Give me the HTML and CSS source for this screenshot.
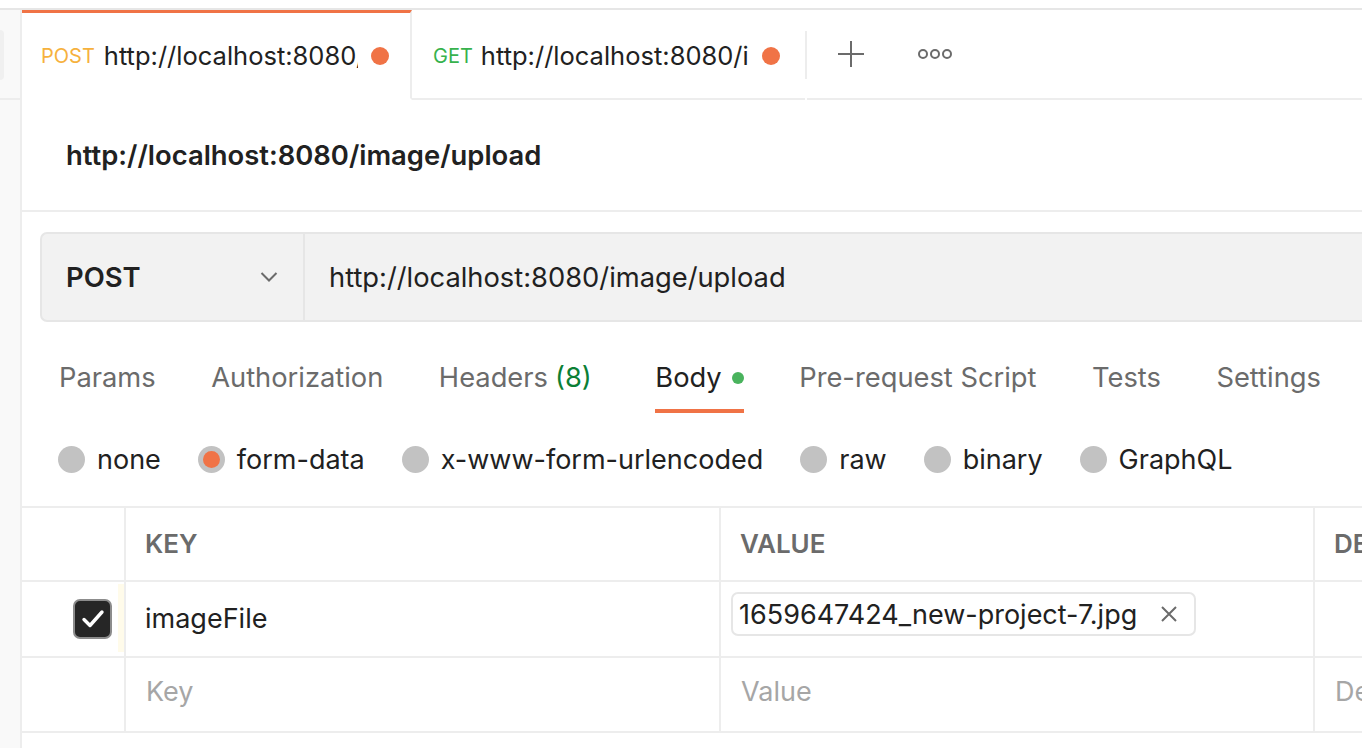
FILE: index.html
```html
<!DOCTYPE html>
<html>
<head>
<meta charset="utf-8">
<link rel="stylesheet" href="styles.css">
</head>
<body>
<div class="topstrip"></div>
<div class="app">
  <aside class="sidebar">
    <div class="side-top"><div class="side-pill"></div></div>
  </aside>
  <main class="main">
    <div class="tabbar">
      <div class="tab active">
        <span class="tab-method post">POST</span>
        <span class="tab-url w1">http://localhost:8080/image/upload</span>
        <span class="tab-dot"></span>
      </div>
      <div class="tab second">
        <span class="tab-method get">GET</span>
        <span class="tab-url w2">http://localhost:8080/image/list</span>
        <span class="tab-dot"></span>
      </div>
      <div class="tab-divider"></div>
      <div class="tab-icon plus">
        <svg width="28" height="28" viewBox="0 0 28 28"><path d="M14 1v26M1 14h26" stroke="#6b6b6b" stroke-width="2" fill="none"/></svg>
      </div>
      <div class="tab-icon more">
        <svg width="34" height="12" viewBox="0 0 34 12"><circle cx="5" cy="6" r="4" stroke="#6b6b6b" stroke-width="2" fill="none"/><circle cx="17" cy="6" r="4" stroke="#6b6b6b" stroke-width="2" fill="none"/><circle cx="29" cy="6" r="4" stroke="#6b6b6b" stroke-width="2" fill="none"/></svg>
      </div>
      <div class="tab-fill"></div>
    </div>

    <div class="titlebar">
      <h1 class="title">http://localhost:8080/image/upload</h1>
    </div>

    <div class="content">
      <div class="urlbox">
        <div class="method">
          <span class="method-name">POST</span>
          <svg class="chev" width="18" height="12" viewBox="0 0 18 12"><path d="M1.5 2l7.5 7.5L16.5 2" stroke="#6b6b6b" stroke-width="2" fill="none"/></svg>
        </div>
        <div class="url">http://localhost:8080/image/upload</div>
      </div>

      <nav class="reqtabs">
        <span class="reqtab">Params</span>
        <span class="reqtab">Authorization</span>
        <span class="reqtab">Headers <span class="count">(8)</span></span>
        <span class="reqtab on">Body <span class="gdot"></span></span>
        <span class="reqtab">Pre-request Script</span>
        <span class="reqtab">Tests</span>
        <span class="reqtab">Settings</span>
      </nav>

      <div class="radios">
        <span class="radio"><span class="rc"></span>none</span>
        <span class="radio sel"><span class="rc"></span>form-data</span>
        <span class="radio"><span class="rc"></span>x-www-form-urlencoded</span>
        <span class="radio"><span class="rc"></span>raw</span>
        <span class="radio"><span class="rc"></span>binary</span>
        <span class="radio"><span class="rc"></span>GraphQL</span>
      </div>
    </div>

    <div class="table">
      <div class="row head">
        <div class="cell c0"></div>
        <div class="cell c1">KEY</div>
        <div class="cell c2">VALUE</div>
        <div class="cell c3">DESCRIPTION</div>
      </div>
      <div class="row">
        <div class="cell c0">
          <span class="cbox"><svg width="26" height="22" viewBox="0 0 26 22"><path d="M4 11.5l6 6L22 4" stroke="#fff" stroke-width="3.4" fill="none" stroke-linecap="round" stroke-linejoin="round"/></svg></span>
          <span class="handle"></span>
        </div>
        <div class="cell c1">imageFile</div>
        <div class="cell c2">
          <span class="chip">1659647424_new-project-7.jpg<svg class="x" width="18" height="18" viewBox="0 0 18 18"><path d="M2 2l14 14M16 2L2 16" stroke="#6b6b6b" stroke-width="2" fill="none"/></svg></span>
        </div>
        <div class="cell c3"></div>
      </div>
      <div class="row last">
        <div class="cell c0"></div>
        <div class="cell c1 ph">Key</div>
        <div class="cell c2 ph">Value</div>
        <div class="cell c3 ph">Description</div>
      </div>
    </div>
  </main>
</div>
</body>
</html>
```
FILE: styles.css
```css
* { box-sizing: border-box; }
html, body { margin: 0; padding: 0; }
body {
  width: 1362px;
  height: 748px;
  overflow: hidden;
  background: #fff;
  font-family: Inter, "Noto Sans", sans-serif;
  color: #212121;
}
.topstrip {
  height: 10px;
  border-bottom: 2px solid #e6e6e6;
}
.app {
  display: flex;
  height: 738px;
}
.sidebar {
  width: 22px;
  flex: none;
  background: #f9f9f9;
  border-right: 2px solid #ededed;
}
.side-top {
  height: 90px;
  border-bottom: 2px solid #ededed;
  padding-top: 20px;
}
.side-pill {
  width: 4px;
  height: 50px;
  background: #f0f0f0;
  border-radius: 0 6px 6px 0;
}
.main {
  flex: 1;
  min-width: 0;
  overflow: hidden;
}
/* tab bar */
.tabbar {
  display: flex;
  align-items: center;
  height: 90px;
}
.tab {
  display: flex;
  align-items: center;
  height: 90px;
  padding-left: 19px;
  border-bottom: 2px solid #ededed;
}
.tab.active {
  width: 390px;
  border-top: 3px solid #f07346;
  border-bottom-color: transparent;
  border-right: 2px solid #ededed;
}
.tab.second {
  width: 393px;
  padding-left: 21px;
  padding-top: 3px;
}
.tab-method {
  font-size: 20px;
  margin-right: 9px;
  flex: none;
}
.tab-method.post { color: #f6b13d; }
.tab-method.get { color: #37b24d; margin-right: 8px; }
.tab-url {
  font-size: 25.5px;
  white-space: nowrap;
  overflow: hidden;
  color: #212121;
  flex: none;
}
.tab-url.w1 { width: 254px; }
.tab-url.w2 { width: 268px; }
.tab-dot {
  width: 18px;
  height: 18px;
  border-radius: 50%;
  background: #f07346;
  margin-left: 13px;
  flex: none;
}
.tab-divider {
  width: 2px;
  height: 48px;
  background: #ededed;
  flex: none;
}
.tab-icon {
  display: flex;
  align-items: center;
  justify-content: center;
  height: 90px;
  border-bottom: 2px solid #ededed;
  flex: none;
}
.tab-icon.plus { width: 88px; }
.tab-icon.more { width: 90px; justify-content: flex-start; padding-left: 23px; }
.tab-fill {
  flex: 1;
  height: 90px;
  border-bottom: 2px solid #ededed;
}
/* title */
.titlebar {
  height: 112px;
  display: flex;
  align-items: center;
  padding-left: 44px;
  border-bottom: 2px solid #ededed;
}
.title {
  margin: 0;
  font-size: 27.4px;
  font-weight: 600;
}
/* url */
.content {
  padding: 20px 0 0 18px;
}
.urlbox {
  display: flex;
  width: 1400px;
  height: 90px;
  background: #f2f2f2;
  border: 2px solid #e6e6e6;
  border-right: none;
  border-radius: 7px 0 0 7px;
}
.method {
  width: 263px;
  flex: none;
  display: flex;
  align-items: center;
  justify-content: space-between;
  padding: 0 25px 0 24px;
  border-right: 2px solid #e6e6e6;
}
.method-name {
  font-size: 27.4px;
  font-weight: 600;
}
.url {
  display: flex;
  align-items: center;
  padding-left: 24px;
  font-size: 27.3px;
}
/* request tabs */
.reqtabs {
  display: flex;
  gap: 55.5px;
  padding-left: 19px;
  height: 91px;
  align-items: flex-end;
  white-space: nowrap;
}
.reqtab {
  font-size: 27.3px;
  line-height: 33px;
  color: #6b6b6b;
  display: flex;
  align-items: center;
  height: 52px;
  padding-bottom: 15px;
  border-bottom: 4px solid transparent;
}
.reqtab .count { color: #0b7f35; margin-left: 7px; }
.reqtab.on {
  color: #212121;
  border-bottom-color: #f07346;
  margin-left: 8px;
}
.gdot {
  width: 12px;
  height: 12px;
  border-radius: 50%;
  background: #49b35d;
  margin-left: 10px;
}
/* radios */
.radios {
  display: flex;
  align-items: center;
  gap: 37px;
  padding-left: 18px;
  height: 93px;
  white-space: nowrap;
}
.radio {
  display: flex;
  align-items: center;
  gap: 12px;
  font-size: 27px;
  color: #212121;
}
.rc {
  width: 27px;
  height: 27px;
  border-radius: 50%;
  background: #c2c2c2;
  display: flex;
  align-items: center;
  justify-content: center;
}
.radio.sel .rc::after {
  content: "";
  width: 17px;
  height: 17px;
  border-radius: 50%;
  background: #f07346;
}
/* table */
.table {
  border-top: 2px solid #ededed;
  border-bottom: 2px solid #ededed;
  width: 1400px;
}
.row {
  display: grid;
  grid-template-columns: 102px 595px 594px 200px;
  height: 76px;
}
.row + .row { border-top: 2px solid #ededed; }
.row.head { height: 72px; }
.row.last { height: 75px; }
.cell {
  display: flex;
  align-items: center;
  font-size: 27px;
  border-left: 2px solid #ededed;
  padding-left: 19px;
  padding-bottom: 2px;
  white-space: nowrap;
  overflow: hidden;
}
.cell.c0 { border-left: none; padding-left: 51px; padding-bottom: 0; position: relative; }
.head .cell {
  font-weight: 600;
  font-size: 26px;
  color: #6b6b6b;
}
.cell.ph { color: #a6a6a6; padding-left: 20px; padding-bottom: 7px; }
.cbox {
  width: 39px;
  height: 40px;
  border-radius: 7px;
  background: #262626;
  border: 2px solid #8c8c8c;
  display: flex;
  align-items: center;
  justify-content: center;
}
.handle {
  position: absolute;
  right: 0;
  top: 2px;
  bottom: 4px;
  width: 6px;
  background: #fffbea;
}
.chip {
  display: inline-flex;
  align-items: center;
  height: 44px;
  border: 2px solid #e6e6e6;
  border-radius: 7px;
  padding: 0 16px 0 6px;
  margin-left: -9px;
  margin-top: -8px;
  font-size: 27px;
  color: #212121;
}
.chip .x { margin-left: 23px; }
```
